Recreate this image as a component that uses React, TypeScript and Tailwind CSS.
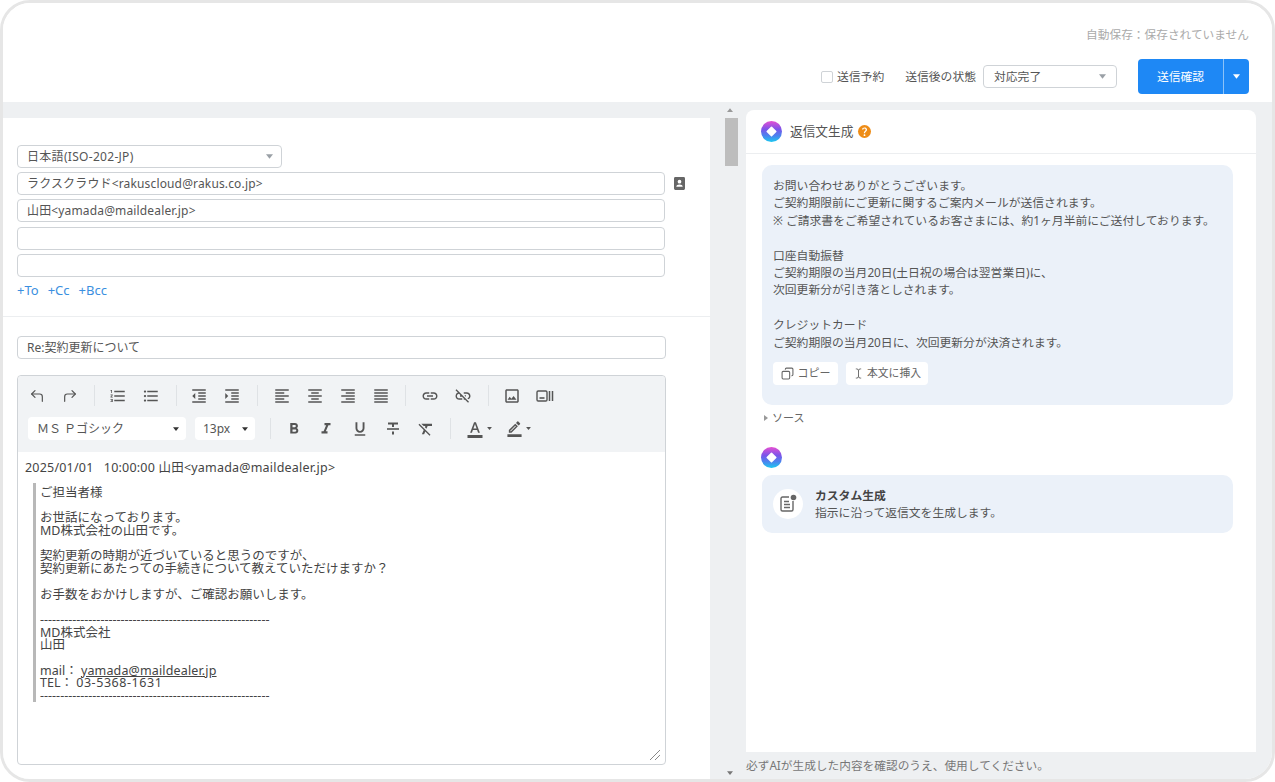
import { Copy, CornerUpLeft, CornerUpRight, TextCursor } from 'lucide-react';
import {
  MdFormatAlignCenter,
  MdFormatAlignJustify,
  MdFormatAlignLeft,
  MdFormatAlignRight,
  MdFormatBold,
  MdFormatClear,
  MdFormatColorText,
  MdFormatIndentDecrease,
  MdFormatIndentIncrease,
  MdFormatItalic,
  MdFormatListBulleted,
  MdFormatListNumbered,
  MdFormatUnderlined,
  MdLink,
  MdLinkOff,
  MdOutlineBorderColor,
  MdOutlineImage,
  MdQuestionMark,
} from 'react-icons/md';

const fieldClass = 'h-[23px] w-[648px] rounded-[4px] border border-[#cfd3d7] bg-white px-[9px] text-[12px] leading-[21px] tracking-[0.15px] text-[#555]';
const divider = 'h-[21px] w-px bg-[#dfe2e5]';

function Caret({ className }: { className: string }) {
  return (
    <svg viewBox="0 0 8 5" className={className}>
      <path d="M0 0h8L4 5z" fill="currentColor" />
    </svg>
  );
}

function AiMark({ id }: { id: string }) {
  return (
    <svg viewBox="0 0 21 21" className="h-[21px] w-[21px] shrink-0">
      <defs>
        <linearGradient id={id} x1="0.6" y1="0" x2="0.6" y2="1">
          <stop offset="0" stopColor="#e64fd2" />
          <stop offset="0.4" stopColor="#7a55ea" />
          <stop offset="0.7" stopColor="#4a84ee" />
          <stop offset="1" stopColor="#1cc8f0" />
        </linearGradient>
      </defs>
      <circle cx="10.5" cy="10.5" r="10.5" fill={`url(#${id})`} />
      <path d="M10.5 6.2 14.8 10.5 10.5 14.8 6.2 10.5Z" fill="#fff" stroke="#fff" strokeWidth="1.5" strokeLinejoin="round" />
    </svg>
  );
}

function MediaIcon() {
  return (
    <svg viewBox="0 0 18 18" className="ml-[15px] h-[18px] w-[18px] text-[#555]" fill="none" stroke="currentColor">
      <rect x="1" y="4" width="10" height="10" rx="1.2" strokeWidth="1.4" />
      <path d="M3.5 11h5" strokeWidth="1.6" />
      <path d="M13.5 4v10M16.5 4v10" strokeWidth="1.5" />
    </svg>
  );
}

function StrikeIcon() {
  return (
    <svg viewBox="0 0 18 18" className="ml-[15px] h-[18px] w-[18px] text-[#555]" fill="none" stroke="currentColor">
      <path d="M3 9h12" strokeWidth="1.6" />
      <path d="M4 3.5h10M9 3.5V7M9 11.5V14.5" strokeWidth="2" />
    </svg>
  );
}

function NoteIcon() {
  return (
    <svg viewBox="0 0 20 20" className="h-[20px] w-[20px] text-[#666]" fill="none" stroke="currentColor">
      <path d="M11 3H4.5A1.5 1.5 0 0 0 3 4.5v11A1.5 1.5 0 0 0 4.5 17h9a1.5 1.5 0 0 0 1.5-1.5V7" strokeWidth="1.4" />
      <path d="M6 7.5h5M6 10.5h6M6 13.5h6" strokeWidth="1.3" />
      <circle cx="15.5" cy="3.5" r="2.8" fill="currentColor" stroke="none" />
    </svg>
  );
}

function ContactIcon() {
  return (
    <svg viewBox="0 0 12 14" className="ml-[9px] h-[13px] w-[11px] text-[#666]">
      <path d="M1.5 0h9A1.5 1.5 0 0 1 12 1.5v11a1.5 1.5 0 0 1-1.5 1.5h-9A1.5 1.5 0 0 1 0 12.5v-11A1.5 1.5 0 0 1 1.5 0Z" fill="currentColor" />
      <circle cx="6" cy="5" r="2" fill="#fff" />
      <path d="M2.5 10.6c0-1.8 1.6-2.6 3.5-2.6s3.5.8 3.5 2.6Z" fill="#fff" />
    </svg>
  );
}

const quoteLines = [
  'ご担当者様',
  '',
  'お世話になっております。',
  'MD株式会社の山田です。',
  '',
  '契約更新の時期が近づいていると思うのですが、',
  '契約更新にあたっての手続きについて教えていただけますか？',
  '',
  'お手数をおかけしますが、ご確認お願いします。',
  '',
  '---------------------------------------------------------',
  'MD株式会社',
  '山田',
  '',
];

const replyLines = [
  'お問い合わせありがとうございます。',
  'ご契約期限前にご更新に関するご案内メールが送信されます。',
  '※ ご請求書をご希望されているお客さまには、約1ヶ月半前にご送付しております。',
  '',
  '口座自動振替',
  'ご契約期限の当月20日(土日祝の場合は翌営業日)に、',
  '次回更新分が引き落としされます。',
  '',
  'クレジットカード',
  'ご契約期限の当月20日に、次回更新分が決済されます。',
];

function Toolbar() {
  const ic = 'text-[#555]';
  return (
    <div className="h-[76px] rounded-t-[4px] bg-[#f1f3f5] pl-[10px] pt-[9px]">
      <div className="flex h-[21px] items-center">
        <CornerUpLeft size={16} strokeWidth={1.8} className={`${ic} ml-[1px]`} />
        <CornerUpRight size={16} strokeWidth={1.8} className={`${ic} ml-[17px]`} />
        <span className={`${divider} ml-[16px]`} />
        <MdFormatListNumbered size={18} className={`${ic} ml-[14px]`} />
        <MdFormatListBulleted size={18} className={`${ic} ml-[15px]`} />
        <span className={`${divider} ml-[16px]`} />
        <MdFormatIndentDecrease size={18} className={`${ic} ml-[13px]`} />
        <MdFormatIndentIncrease size={18} className={`${ic} ml-[15px]`} />
        <span className={`${divider} ml-[16px]`} />
        <MdFormatAlignLeft size={18} className={`${ic} ml-[15px]`} />
        <MdFormatAlignCenter size={18} className={`${ic} ml-[15px]`} />
        <MdFormatAlignRight size={18} className={`${ic} ml-[15px]`} />
        <MdFormatAlignJustify size={18} className={`${ic} ml-[15px]`} />
        <span className={`${divider} ml-[15px]`} />
        <MdLink size={18} className={`${ic} ml-[15px]`} />
        <MdLinkOff size={18} className={`${ic} ml-[15px]`} />
        <span className={`${divider} ml-[16px]`} />
        <MdOutlineImage size={18} className={`${ic} ml-[14px]`} />
        <MediaIcon />
      </div>
      <div className="mt-[11px] flex h-[23px] items-center">
        <div className="flex h-[23px] w-[158px] items-center justify-between rounded-[4px] bg-white pl-[9px] pr-[7px] text-[12px] text-[#555]">
          <span>ＭＳ Ｐゴシック</span>
          <Caret className="h-[4px] w-[6px] text-[#333]" />
        </div>
        <div className="ml-[9px] flex h-[23px] w-[60px] items-center justify-between rounded-[4px] bg-white pl-[8px] pr-[7px] text-[12px] text-[#555]">
          <span>13px</span>
          <Caret className="h-[4px] w-[6px] text-[#333]" />
        </div>
        <span className={`ml-[15px] ${divider}`} />
        <MdFormatBold size={18} className={`${ic} ml-[14px]`} />
        <MdFormatItalic size={18} className={`${ic} ml-[14px]`} />
        <MdFormatUnderlined size={18} className={`${ic} ml-[16px]`} />
        <StrikeIcon />
        <MdFormatClear size={18} className={`${ic} ml-[15px]`} />
        <span className={`ml-[15px] ${divider}`} />
        <MdFormatColorText size={18} className={`${ic} ml-[15px]`} />
        <Caret className="ml-[3px] h-[3px] w-[5px] text-[#555]" />
        <MdOutlineBorderColor size={17} className={`${ic} ml-[14px]`} />
        <Caret className="ml-[3px] h-[3px] w-[5px] text-[#555]" />
      </div>
    </div>
  );
}

function ComposePane() {
  return (
    <div className="mt-[16px] h-[661px] w-[707px] overflow-hidden bg-white">
      <div className="px-[14px] pt-[27px]">
        <div className="flex h-[23px] w-[265px] items-center justify-between rounded-[4px] border border-[#cfd3d7] pl-[9px] pr-[8px] text-[12px] tracking-[0.3px] text-[#555]">
          <span>日本語(ISO-202-JP)</span>
          <Caret className="h-[5px] w-[7px] text-[#9aa0a6]" />
        </div>
        <div className="mt-[4px] flex items-center">
          <div className={fieldClass}>ラクスクラウド&lt;rakuscloud@rakus.co.jp&gt;</div>
          <ContactIcon />
        </div>
        <div className={`mt-[4px] ${fieldClass}`}>山田&lt;yamada@maildealer.jp&gt;</div>
        <div className={`mt-[5px] ${fieldClass}`} />
        <div className={`mt-[4px] ${fieldClass}`} />
        <div className="mt-[5px] flex gap-[9px] text-[13px] leading-[16px] text-[#3b8fe0]">
          <span>+To</span>
          <span>+Cc</span>
          <span>+Bcc</span>
        </div>
      </div>
      <div className="mt-[18px] border-t border-[#eceef0] px-[14px] pt-[19px]">
        <div className="h-[23px] w-[649px] rounded-[4px] border border-[#cfd3d7] px-[9px] text-[12px] leading-[21px] text-[#555]">
          Re:契約更新について
        </div>
        <div className="relative mt-[16px] h-[390px] w-[649px] rounded-[4px] border border-[#cfd3d7]">
          <Toolbar />
          <div className="pl-[7px] pt-[8px] text-[12.5px] text-[#444]">
            <div className="leading-[16px] tracking-[0.2px]">2025/01/01 &nbsp;&nbsp;10:00:00 山田&lt;yamada@maildealer.jp&gt;</div>
            <div className="ml-[8px] mt-[7px] h-[219px] w-[400px] border-l-[3px] border-[#b8b8b8] pl-[4px] pt-[4px] leading-[12.7px]">
              {quoteLines.map((line, i) => (
                <div key={i} className="h-[12.7px] whitespace-nowrap">{line}</div>
              ))}
              <div className="h-[12.7px] whitespace-nowrap">mail： <span className="tracking-[0.15px] underline">yamada@maildealer.jp</span></div>
              <div className="h-[12.7px] whitespace-nowrap">TEL： <span className="tracking-[0.55px]">03-5368-1631</span></div>
              <div className="h-[12.7px] whitespace-nowrap">---------------------------------------------------------</div>
            </div>
          </div>
          {/* resize handle */}
          <svg viewBox="0 0 12 12" className="absolute bottom-[3px] right-[4px] h-[12px] w-[12px] text-[#888]">
            <path d="M1 11 11 1M6 11 11 6" stroke="currentColor" strokeWidth="1" fill="none" />
          </svg>
        </div>
      </div>
    </div>
  );
}

function ReplyPane() {
  return (
    <div className="flex w-[510px] flex-col">
      <div className="mt-[8px] h-[643px] rounded-t-[8px] bg-white">
        <div className="flex h-[44px] items-center border-b border-[#eceef0] pl-[15px]">
          <AiMark id="aiMarkTop" />
          <span className="ml-[8px] text-[12.7px] text-[#555]">返信文生成</span>
          <span className="ml-[5px] flex h-[13px] w-[13px] items-center justify-center rounded-full bg-[#ee8c16]">
            <MdQuestionMark size={11} className="text-white" />
          </span>
        </div>
        <div className="mx-[16px] mt-[11px] h-[240px] w-[471px] rounded-[10px] bg-[#ebf1f9] pl-[11px] pt-[12px]">
          <div className="text-[11.8px] leading-[17.4px] text-[#555]">
            {replyLines.map((line, i) => (
              <div key={i} className="h-[17.4px] whitespace-nowrap">{line}</div>
            ))}
          </div>
          <div className="mt-[11px] flex gap-[8px]">
            <div className="flex h-[23px] w-[65px] items-center justify-center gap-[4px] rounded-[4px] bg-white text-[11px] text-[#666]">
              <Copy size={13} className="-scale-x-100 text-[#666]" />
              コピー
            </div>
            <div className="flex h-[23px] w-[82px] items-center justify-center gap-[3px] rounded-[4px] bg-white text-[10.8px] text-[#666]">
              <TextCursor size={11} className="text-[#666]" />
              本文に挿入
            </div>
          </div>
        </div>
        <div className="ml-[18px] mt-[5px] flex h-[16px] items-center text-[11px] text-[#666]">
          <svg viewBox="0 0 4 6" className="mr-[4px] h-[6px] w-[4px] text-[#999]"><path d="M0 0 4 3 0 6z" fill="currentColor" /></svg>
          ソース
        </div>
        <div className="ml-[15px] mt-[21px]"><AiMark id="aiMarkBottom" /></div>
        <div className="mx-[16px] mt-[7px] flex h-[58px] w-[471px] items-center rounded-[10px] bg-[#ebf1f9] pl-[11px]">
          <div className="flex h-[30px] w-[30px] items-center justify-center rounded-full bg-white">
            <NoteIcon />
          </div>
          <div className="ml-[12px] text-[11.8px] leading-[17px]">
            <div className="font-bold text-[#444]">カスタム生成</div>
            <div className="text-[#555]">指示に沿って返信文を生成します。</div>
          </div>
        </div>
      </div>
      <div className="flex h-[27px] items-center pt-[1px] text-[11.7px] text-[#777]">必ずAIが生成した内容を確認のうえ、使用してください。</div>
    </div>
  );
}

export default function App() {
  return (
    <div
      className="h-[782px] w-[1275px] overflow-hidden rounded-[30px] border-[3px] border-[#e6e6e6] bg-white"
      style={{ fontFamily: '"Noto Sans", "Noto Sans CJK JP", sans-serif' }}
    >
      <header className="flex h-[99px] flex-col items-end bg-white pr-[23px]">
        <div className="mt-[22px] text-[11.7px] leading-[18px] text-[#aaa]">自動保存：保存されていません</div>
        <div className="mt-[16px] flex h-[35px] items-center text-[11.8px] text-[#555]">
          <span className="h-[12px] w-[12px] rounded-[2px] border border-[#cfd3d7]" />
          <span className="ml-[4px]">送信予約</span>
          <span className="ml-[21px]">送信後の状態</span>
          <div className="ml-[7px] flex h-[23px] w-[134px] items-center justify-between rounded-[4px] border border-[#cfd3d7] pl-[10px] pr-[10px]">
            <span>対応完了</span>
            <Caret className="h-[5px] w-[7px] text-[#9aa0a6]" />
          </div>
          <div className="ml-[21px] flex h-[35px] w-[111px] overflow-hidden rounded-[4px] bg-[#1e88f5] text-white">
            <div className="flex w-[85px] items-center justify-center pt-[1px] text-[11.8px]">送信確認</div>
            <div className="flex flex-1 items-center justify-center border-l border-[#8cc2f8]">
              <Caret className="h-[5px] w-[7px] text-white" />
            </div>
          </div>
        </div>
      </header>
      <main className="flex h-[677px] bg-[#eef0f2]">
        <ComposePane />
        <div className="relative w-[36px]">
          <Caret className="absolute left-[17px] top-[6px] h-[4px] w-[6px] rotate-180 text-[#999]" />
          <div className="absolute left-[15px] top-[16px] h-[48px] w-[13px] bg-[#bdbdbd]" />
          <Caret className="absolute bottom-[4px] left-[17px] h-[4px] w-[6px] text-[#777]" />
        </div>
        <ReplyPane />
      </main>
    </div>
  );
}
